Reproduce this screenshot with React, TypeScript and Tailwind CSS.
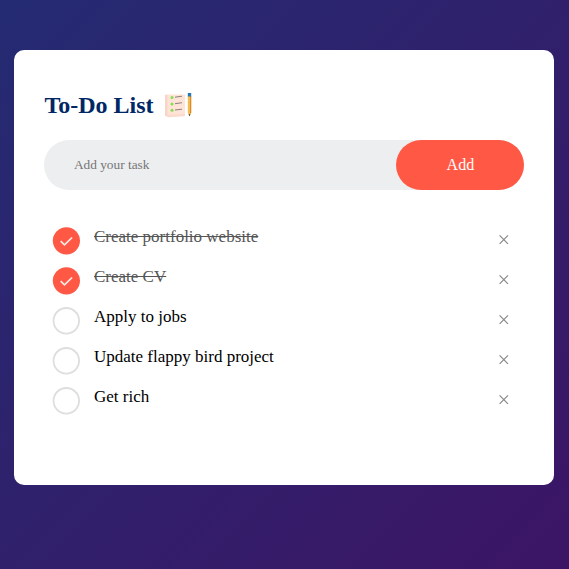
import { useState } from "react";

type Task = { text: string; done: boolean };

const initialTasks: Task[] = [
  { text: "Create portfolio website", done: true },
  { text: "Create CV", done: true },
  { text: "Apply to jobs", done: false },
  { text: "Update flappy bird project", done: false },
  { text: "Get rich", done: false },
];

function ListIcon() {
  return (
    <svg className="mt-0.5 ml-[9px] h-[30px] w-[30px]" viewBox="0 0 30 30" fill="none" aria-hidden="true">
      <path d="M2 3.5h20v21.5L5 26.2 2 24.5Z" fill="#ffe3d6" />
      <path d="M2 4h2.5v21.8L2 24.5Z" fill="#f9d5c8" />
      <path d="M4.5 24 22 23v2L5 26.2Z" fill="#fbdacb" />
      <circle cx="9" cy="6.5" r="1.5" fill="#83df52" />
      <circle cx="9" cy="13" r="1.5" fill="#83df52" />
      <circle cx="9" cy="19.2" r="1.5" fill="#83df52" />
      <path d="m12 6.2 7-1M12 12.7l7-1M12 19l7-.8" stroke="#8c8082" strokeWidth="1" />
      <path d="M24.8 5h3.4v16.5l-1.7 4-1.7-4Z" fill="#f5ba50" />
      <path d="M27 5h1.2v16.5L27 23Z" fill="#d98c2c" />
      <path d="M24.8 2h3.4v3.5h-3.4Z" fill="#2878b4" />
      <path d="m25.6 23.2.9 2 .9-2Z" fill="#34302e" />
    </svg>
  );
}

function Marker({ done }: { done: boolean }) {
  return (
    <svg className="mt-[10px] h-7 w-7 shrink-0" viewBox="0 0 28 28" fill="none" aria-hidden="true">
      {done ? (
        <>
          <circle cx="14.4" cy="13.8" r="13.6" fill="#ff5945" />
          <path d="m8.7 14.1 3.8 3.7 7.6-7.3" stroke="#ffe9e4" strokeWidth="1.7" />
        </>
      ) : (
        <circle cx="14.3" cy="13.8" r="12.8" stroke="#dedede" strokeWidth="1.8" />
      )}
    </svg>
  );
}

export default function App() {
  const [tasks, setTasks] = useState(initialTasks);
  const [draft, setDraft] = useState("");

  const toggle = (index: number) =>
    setTasks(tasks.map((t, i) => (i === index ? { ...t, done: !t.done } : t)));
  const remove = (index: number) => setTasks(tasks.filter((_, i) => i !== index));
  const add = () => {
    if (!draft.trim()) return;
    setTasks([...tasks, { text: draft, done: false }]);
    setDraft("");
  };

  return (
    <main className="min-h-screen bg-[linear-gradient(135deg,#242b72,#3c1565)] px-[14.4px] pt-[50px] font-['Liberation_Serif',serif]">
      <section className="h-[435px] w-[540px] rounded-[10px] bg-white px-[30px] pt-10">
        <h1 className="flex h-[30px] items-center text-2xl leading-[30px] font-bold text-[#002765]">
          To-Do List
          <ListIcon />
        </h1>

        <div className="mt-5 flex h-[50px] rounded-full bg-[#edeef0]">
          <input
            className="min-w-0 flex-1 bg-transparent pl-[29.5px] text-[13.333px] outline-none placeholder:text-[#757575]"
            placeholder="Add your task"
            value={draft}
            onChange={(e) => setDraft(e.target.value)}
          />
          <button className="w-32 rounded-full bg-[#ff5945] text-base text-white" onClick={add}>
            Add
          </button>
        </div>

        <ul className="mt-[27px]">
          {tasks.map((task, i) => (
            <li key={i} className="flex h-10 pr-[11px] pl-2">
              <button className="flex flex-1 items-start text-left" onClick={() => toggle(i)}>
                <Marker done={task.done} />
                <span
                  className={
                    task.done
                      ? "ml-[13.6px] pt-[10px] text-[17px] leading-5 text-[#555] line-through"
                      : "ml-[13.6px] pt-[10px] text-[17px] leading-5 text-black"
                  }
                >
                  {task.text}
                </span>
              </button>
              <button className="mt-3 flex h-5 w-5 items-center justify-center" onClick={() => remove(i)} aria-label="Remove">
                <svg className="h-[11px] w-[11px]" viewBox="0 0 11 11" fill="none">
                  <path d="m1.6 1.4 8.4 8.4m0-8.4L1.6 9.8" stroke="#888" strokeWidth="1.2" />
                </svg>
              </button>
            </li>
          ))}
        </ul>
      </section>
    </main>
  );
}
